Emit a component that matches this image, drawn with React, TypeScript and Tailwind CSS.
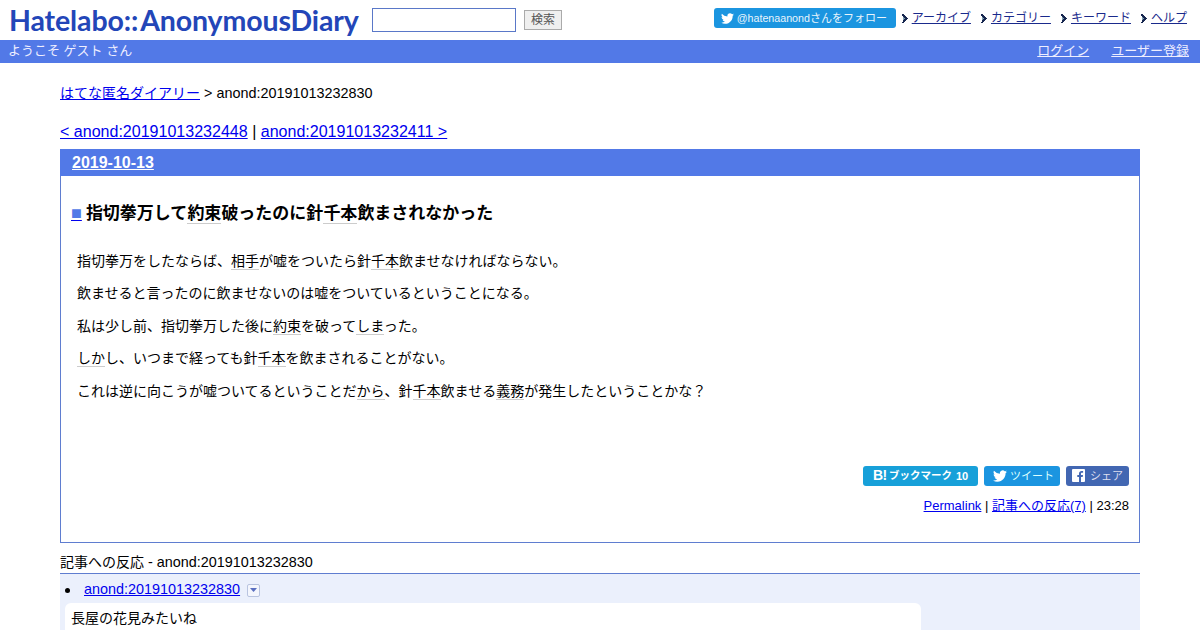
import React from "react";

const K = ({ children }: { children: React.ReactNode }) => (
  <span className="border-b border-[#ccc]">{children}</span>
);
const J = ({ children }: { children: React.ReactNode }) => <span className="text-[14px]">{children}</span>;

const Bullet = () => (
  <svg width="7" height="9" viewBox="0 0 7 9" className="shrink-0" aria-hidden shapeRendering="crispEdges">
    <path d="M0 0h2v1h1v1h1v1h1v1h1v1H5v1H4v1H3v1H2v1H0V8h1V7h0V6h1V5h1V4H2V3H1V2H0z" fill="#16264f" />
    <path d="M2 2h1v1h1v1h1v1H4v1H3v1H2V6h1V5h1V4H3V3H2z" fill="#16264f" />
    <path d="M1 3h1v1h1v1H2v1H1z" fill="#7fa0b0" />
  </svg>
);

const Bird = ({ s = 13 }: { s?: number }) => (
  <svg width={s} height={s} viewBox="0 0 24 24" fill="#fff" aria-hidden>
    <path d="M23.95 4.57a10 10 0 0 1-2.82.77 4.96 4.96 0 0 0 2.16-2.72c-.95.55-2 .95-3.12 1.18a4.92 4.92 0 0 0-8.38 4.48A13.97 13.97 0 0 1 1.64 3.16a4.82 4.82 0 0 0-.67 2.48c0 1.71.87 3.2 2.19 4.1a4.9 4.9 0 0 1-2.23-.62v.06a4.92 4.92 0 0 0 3.95 4.83 5 5 0 0 1-2.21.08 4.94 4.94 0 0 0 4.6 3.42A9.87 9.87 0 0 1 0 19.54a14 14 0 0 0 7.56 2.21c9.05 0 14-7.5 14-13.98l-.02-.64a9.9 9.9 0 0 0 2.41-2.55z" />
  </svg>
);

const NavItem = ({ label }: { label: string }) => (
  <span className="flex items-center gap-[3px]">
    <Bullet />
    <a href="#" className="text-[12px] text-[#1a2a8c] underline">{label}</a>
  </span>
);

export default function App() {
  return (
    <div className="w-[1200px] h-[630px] overflow-hidden bg-white text-black text-[14.4px] font-['Liberation_Sans','Noto_Sans_CJK_JP',sans-serif]">
      <header className="h-[40px] flex items-start justify-between">
        <div className="flex items-start">
          <div className="ml-[9px] mt-[3px] w-[350px] h-[34px] leading-[34px] text-[28.5px] font-bold text-[#2346b8] font-['Lato',sans-serif] tracking-[-0.12px] whitespace-nowrap">
            Hatelabo::<span className="ml-[2px]">AnonymousDiary</span>
          </div>
          <input className="ml-[13px] mt-[8px] w-[144px] h-[24px] border border-[#5a78c8] bg-white" aria-label="検索語" />
          <button className="ml-[8px] mt-[10px] w-[38px] h-[20px] border border-[#aaa] bg-[#efefef] text-[12px] leading-[18px] text-[#555]">検索</button>
        </div>
        <div className="flex items-center mt-[8px] mr-[13px]">
          <a className="mr-[6px] w-[182px] h-[20px] bg-[#1b95e0] rounded-[3px] flex items-center pl-[7px] gap-[3px] text-[#e8f4fc] text-[10.7px] whitespace-nowrap">
            <Bird s={13} />
            <span>@hatenaanond<span className="text-[11px]">さんをフォロー</span></span>
          </a>
          <div className="flex items-center gap-[10px]">
            <NavItem label="アーカイブ" />
            <NavItem label="カテゴリー" />
            <NavItem label="キーワード" />
            <NavItem label="ヘルプ" />
          </div>
        </div>
      </header>

      <div className="h-[23px] bg-[#5279e7] flex items-center justify-between pl-[8px] pr-[11px] pb-[1px] text-[13px] text-[#eef]">
        <span>ようこそ ゲスト さん</span>
        <span className="flex gap-[22px]">
          <a href="#" className="underline">ログイン</a>
          <a href="#" className="underline">ユーザー登録</a>
        </span>
      </div>

      <main className="mx-[60px]">
        <p className="mt-[21px] h-[18px] leading-[18px]">
          <a href="#" className="text-[#0000ee] underline"><J>はてな匿名ダイアリー</J></a> &gt; anond:20191013232830
        </p>
        <p className="mt-[19px] h-[20px] leading-[20px] text-[16.05px]">
          <a href="#" className="text-[#0000ee] underline">&lt; anond:20191013232448</a> | <a href="#" className="text-[#0000ee] underline">anond:20191013232411 &gt;</a>
        </p>

        <section className="mt-[8px] h-[394px] border border-[#5f7dd0] border-t-0">
          <div className="h-[27px] -mx-px bg-[#5279e7] pl-[12px] pt-[2px] leading-[24px]">
            <a href="#" className="text-white underline font-bold text-[16px]">2019-10-13</a>
          </div>
          <h1 className="mt-[25px] ml-[10px] h-[24px] leading-[24px] text-[17px] font-bold">
            <a href="#" className="text-[#5279e7] underline decoration-[#0000ee] font-normal text-[18px] mr-[4px]">■</a>
            指切拳万して<K>約束</K>破ったのに針<K>千本</K>飲まされなかった
          </h1>
          <div className="mt-[25.9px] ml-[16px] text-[14px] leading-[20px] flex flex-col gap-[12.5px]">
            <p>指切拳万をしたならば、<K>相手</K>が嘘をついたら針<K>千本</K>飲ませなければならない。</p>
            <p>飲ませると言ったのに飲ませないのは嘘をついているということになる。</p>
            <p>私は少し前、指切拳万した後に<K>約束</K>を破って<K>しま</K>った。</p>
            <p><K>しか</K>し、いつまで経っても針<K>千本</K>を飲まされることがない。</p>
            <p>これは逆に向こうが嘘ついてるということだ<K>から</K>、針<K>千本</K>飲ませる<K>義務</K>が発生したということかな？</p>
          </div>
          <div className="mt-[65px] mr-[10px] flex justify-end gap-[6px] h-[20px]">
            <a className="w-[115px] bg-[#17a0d9] rounded-[3px] text-white flex items-center pl-[10px] font-bold text-[10.5px] whitespace-nowrap">
              <span className="text-[14px] w-[16px] tracking-[-0.5px]">B!</span><span>ブックマーク</span><span className="ml-[4px] text-[11px]">10</span>
            </a>
            <a className="w-[76px] bg-[#1b95e0] rounded-[3px] text-[#dff] flex items-center pl-[9px] gap-[3px] text-[11px] whitespace-nowrap">
              <Bird s={14} /> ツイート
            </a>
            <a className="w-[63px] bg-[#4267b2] rounded-[3px] text-[#dde] flex items-center pl-[6px] gap-[5px] text-[11px] whitespace-nowrap">
              <svg width="13" height="13" viewBox="0 0 13 13" aria-hidden>
                <rect width="13" height="13" rx="1" fill="#fff" />
                <path d="M9 13V8h1.7l.3-2H9V4.8c0-.6.2-1 1-1h1.100V2a12 12 0 0 0-1.500-.1C8.100 1.900 7 2.800 7 4.500V6H5.300v2H7v5z" fill="#4267b2" />
              </svg>
              シェア
            </a>
          </div>
          <p className="mt-[10px] mr-[10px] text-right text-[13px] leading-[20px]">
            <a href="#" className="text-[#0000ee] underline">Permalink</a> | <a href="#" className="text-[#0000ee] underline">記事への反応(7)</a> | 23:28
          </p>
        </section>

        <p className="mt-[9px] h-[21px] leading-[20px]"><J>記事への反応</J> - anond:20191013232830</p>
        <div className="h-[57px] bg-[#ebf0fc] border-t border-[#5f7dd0] overflow-hidden">
          <div className="flex items-center h-[29px] pt-[3px] pl-[5px]">
            <span className="w-[5px] h-[5px] rounded-full bg-black" />
            <a href="#" className="ml-[14px] text-[#0000ee] underline">anond:20191013232830</a>
            <span className="ml-[7px] w-[13px] h-[13px] border border-[#b9c4e0] rounded-[2px] bg-[#f4f6fd] flex items-center justify-center">
              <svg width="7" height="4" viewBox="0 0 7 4" aria-hidden><path d="M0 0h7L3.500 4z" fill="#5a6fc0" /></svg>
            </span>
          </div>
          <div className="ml-[5px] w-[856px] h-[40px] bg-white rounded-[6px] pl-[6px] pt-[5px] leading-[20px] text-[14px]">長屋の花見みたいね</div>
        </div>
      </main>
    </div>
  );
}
